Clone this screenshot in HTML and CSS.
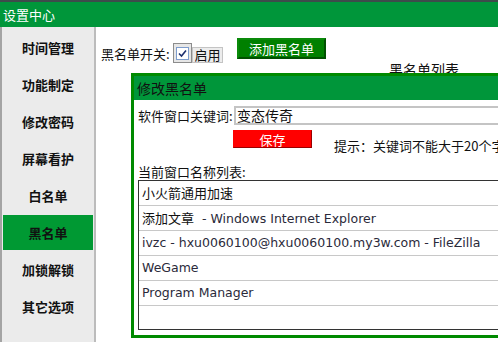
FILE: index.html
```html
<!DOCTYPE html>
<html lang="zh">
<head>
  <meta charset="UTF-8">
  <title>设置中心</title>
  <link rel="stylesheet" href="styles.css">
</head>
<body>
  <div class="topstrip"></div>
  <div class="titlebar">设置中心</div>

  <div class="layout">
    <div class="sidebar">
      <div class="nav-item">时间管理</div>
      <div class="nav-item">功能制定</div>
      <div class="nav-item">修改密码</div>
      <div class="nav-item">屏幕看护</div>
      <div class="nav-item">白名单</div>
      <div class="nav-item active">黑名单</div>
      <div class="nav-item">加锁解锁</div>
      <div class="nav-item">其它选项</div>
    </div>

    <div class="main">
      <div class="switch-row">
        <span class="switch-label">黑名单开关:</span>
        <span class="checkbox">
          <span class="check-inner">
            <svg width="11" height="11" viewBox="0 0 11 11"><path d="M2 5.5 L4.5 8 L9 2.5" fill="none" stroke="#1c2f6e" stroke-width="1.6"/></svg>
          </span>
        </span>
        <span class="enable-box">启用</span>
        <button class="add-btn">添加黑名单</button>
      </div>
      <div class="list-title">黑名单列表</div>

      <!-- 弹出框 -->
      <div class="dialog">
        <div class="dialog-head">修改黑名单</div>
        <div class="dialog-body">
          <div class="keyword-row">
            <span class="keyword-label">软件窗口关键词:</span>
            <div class="keyword-input">变态传奇</div>
          </div>
          <div class="save-row">
            <button class="save-btn">保存</button>
            <span class="hint">提示：关键词不能大于20个字符</span>
          </div>
          <div class="win-label">当前窗口名称列表:</div>
          <div class="win-list">
            <div class="win-row cjk">小火箭通用加速</div>
            <div class="win-row"><span class="cjk">添加文章</span>&nbsp; - Windows Internet Explorer</div>
            <div class="win-row">ivzc - hxu0060100@hxu0060100.my3w.com - FileZilla</div>
            <div class="win-row">WeGame</div>
            <div class="win-row">Program Manager</div>
          </div>
        </div>
      </div>
    </div>
  </div>
</body>
</html>
```

FILE: styles.css
```css
body {
  margin: 0;
  width: 498px;
  height: 342px;
  overflow: hidden;
  font-family: "Noto Sans CJK SC", "DejaVu Sans", sans-serif;
  font-size: 13px;
  color: #111;
  background: #fff;
}

.topstrip {
  height: 2px;
  background: #3e4b4b;
}

.titlebar {
  height: 25px;
  line-height: 25px;
  padding-left: 3px;
  background: #00963a;
  color: #fff;
  font-size: 13px;
}

.layout {
  display: flex;
  height: 315px;
}

.sidebar {
  width: 96px;
  box-sizing: border-box;
  background: #ebebeb;
  border-left: 2px solid #a4a4a4;
  border-right: 2px solid #bcbcbc;
  padding: 3px 1px 0 1px;
}

.nav-item {
  height: 35px;
  line-height: 35px;
  margin-bottom: 2px;
  text-align: center;
  font-weight: bold;
  font-size: 13px;
}

.nav-item.active {
  background: #009933;
}

.main {
  flex: 1;
  position: relative;
  padding: 11px 0 0 5px;
}

.switch-row {
  display: flex;
  align-items: flex-start;
}

.switch-label {
  line-height: 20px;
  margin-top: 6px;
  width: 72px;
}

.checkbox {
  margin-top: 5px;
  width: 19px;
  height: 20px;
  box-sizing: border-box;
  border: 1px solid #8c8c8c;
  background: #e6e6e6;
  display: flex;
  align-items: center;
  justify-content: center;
}

.check-inner {
  width: 13px;
  height: 13px;
  box-sizing: border-box;
  border: 1px solid #7d9ccc;
  background: #fff;
  display: flex;
  align-items: center;
  justify-content: center;
}

.enable-box {
  margin-top: 9px;
  width: 31px;
  height: 16px;
  box-sizing: border-box;
  border: 1px solid #c4c4c4;
  background: #ececec;
  line-height: 14px;
  text-align: center;
  font-size: 13px;
}

.add-btn {
  margin-left: 14px;
  width: 89px;
  height: 21px;
  padding: 0;
  background: #008000;
  color: #fff;
  font-family: inherit;
  font-size: 13px;
  line-height: 17px;
  border: 2px solid #005000;
  border-top-color: #0a8a0a;
  border-left-color: #0a8a0a;
}

.list-title {
  margin: -3px 0 0 288px;
  font-size: 14px;
  line-height: 16px;
}

.dialog {
  position: absolute;
  left: 35px;
  top: 46px;
  width: 420px;
  height: 259px;
  border: 3px solid #008a00;
  background: #fff;
}

.dialog-head {
  height: 24px;
  line-height: 24px;
  padding-left: 3px;
  background: #00963a;
  color: #111;
  font-size: 14px;
}

.dialog-body {
  padding: 6px 0 0 4px;
}

.keyword-row {
  display: flex;
  align-items: center;
}

.keyword-label {
  width: 96px;
}

.keyword-input {
  flex: 1;
  height: 19px;
  box-sizing: border-box;
  border: 2px solid #c4c4c4;
  border-right: none;
  padding-left: 1px;
  line-height: 15px;
  font-size: 14px;
}

.save-row {
  display: flex;
  align-items: flex-start;
  margin: 5px 0 0 95px;
  height: 34px;
}

.save-btn {
  width: 79px;
  height: 18px;
  padding: 0;
  background: #ff0000;
  color: #fff;
  font-family: inherit;
  font-size: 13px;
  line-height: 15px;
  border: 1px solid #ff0000;
  border-right-color: #990000;
  border-bottom-color: #990000;
}

.hint {
  margin: 8px 0 0 22px;
  line-height: 16px;
  white-space: nowrap;
}

.win-label {
  line-height: 16px;
}

.win-list {
  height: 150px;
  box-sizing: border-box;
  border: 1px solid #333;
  border-right: none;
}

.win-row {
  height: 24px;
  line-height: 24px;
  border-bottom: 1px solid #c8c8c8;
  padding-left: 3px;
  font-family: "DejaVu Sans", "Noto Sans CJK SC", sans-serif;
  font-size: 12.5px;
  color: #2a2a3a;
  white-space: nowrap;
}

.cjk {
  font-family: "Noto Sans CJK SC", sans-serif;
  font-size: 13px;
  color: #111;
}
```
